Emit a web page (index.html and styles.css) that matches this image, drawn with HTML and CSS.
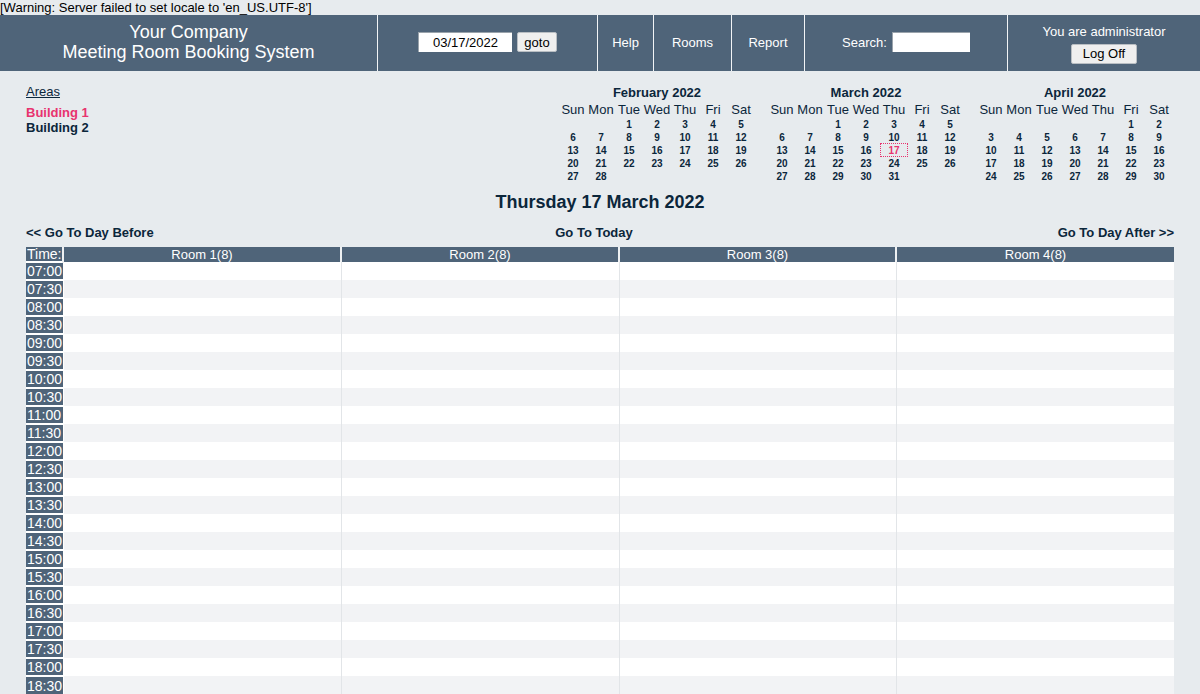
FILE: index.html
```html
<!DOCTYPE html>
<html lang="en">
<head>
<meta charset="utf-8">
<title>Meeting Room Booking System</title>
<link rel="stylesheet" href="styles.css">
</head>
<body>
<div class="warning">[Warning: Server failed to set locale to 'en_US.UTF-8']</div>
<header class="banner">
  <div class="cell company">
    <div>Your Company</div>
    <div>Meeting Room Booking System</div>
  </div>
  <div class="cell c-date">
    <input class="date-input" type="text" value="03/17/2022">
    <button class="btn btn-goto">goto</button>
  </div>
  <div class="cell c-help">Help</div>
  <div class="cell c-rooms">Rooms</div>
  <div class="cell c-report">Report</div>
  <div class="cell c-search">
    <span>Search:</span>
    <input class="search-input" type="text">
  </div>
  <div class="cell c-user">
    <div class="user-text">You are administrator</div>
    <button class="btn btn-logoff">Log Off</button>
  </div>
</header>

<main class="content">
  <div class="dwm-header">
    <div class="areas">
      <div class="areas-title">Areas</div>
      <ul class="area-list">
        <li class="area current">Building 1</li>
        <li class="area">Building 2</li>
      </ul>
    </div>
    <div class="calendars">
      <table class="minical">
        <thead>
          <tr><th colspan="7" class="cal-title">February 2022</th></tr>
          <tr class="dow"><th>Sun</th><th>Mon</th><th>Tue</th><th>Wed</th><th>Thu</th><th>Fri</th><th>Sat</th></tr>
        </thead>
        <tbody>
          <tr><td></td><td></td><td>1</td><td>2</td><td>3</td><td>4</td><td>5</td></tr>
          <tr><td>6</td><td>7</td><td>8</td><td>9</td><td>10</td><td>11</td><td>12</td></tr>
          <tr><td>13</td><td>14</td><td>15</td><td>16</td><td>17</td><td>18</td><td>19</td></tr>
          <tr><td>20</td><td>21</td><td>22</td><td>23</td><td>24</td><td>25</td><td>26</td></tr>
          <tr><td>27</td><td>28</td><td></td><td></td><td></td><td></td><td></td></tr>
        </tbody>
      </table>
      <table class="minical">
        <thead>
          <tr><th colspan="7" class="cal-title">March 2022</th></tr>
          <tr class="dow"><th>Sun</th><th>Mon</th><th>Tue</th><th>Wed</th><th>Thu</th><th>Fri</th><th>Sat</th></tr>
        </thead>
        <tbody>
          <tr><td></td><td></td><td>1</td><td>2</td><td>3</td><td>4</td><td>5</td></tr>
          <tr><td>6</td><td>7</td><td>8</td><td>9</td><td>10</td><td>11</td><td>12</td></tr>
          <tr><td>13</td><td>14</td><td>15</td><td>16</td><td class="today"><span>17</span></td><td>18</td><td>19</td></tr>
          <tr><td>20</td><td>21</td><td>22</td><td>23</td><td>24</td><td>25</td><td>26</td></tr>
          <tr><td>27</td><td>28</td><td>29</td><td>30</td><td>31</td><td></td><td></td></tr>
        </tbody>
      </table>
      <table class="minical">
        <thead>
          <tr><th colspan="7" class="cal-title">April 2022</th></tr>
          <tr class="dow"><th>Sun</th><th>Mon</th><th>Tue</th><th>Wed</th><th>Thu</th><th>Fri</th><th>Sat</th></tr>
        </thead>
        <tbody>
          <tr><td></td><td></td><td></td><td></td><td></td><td>1</td><td>2</td></tr>
          <tr><td>3</td><td>4</td><td>5</td><td>6</td><td>7</td><td>8</td><td>9</td></tr>
          <tr><td>10</td><td>11</td><td>12</td><td>13</td><td>14</td><td>15</td><td>16</td></tr>
          <tr><td>17</td><td>18</td><td>19</td><td>20</td><td>21</td><td>22</td><td>23</td></tr>
          <tr><td>24</td><td>25</td><td>26</td><td>27</td><td>28</td><td>29</td><td>30</td></tr>
        </tbody>
      </table>
    </div>
  </div>

  <h2 class="day-title">Thursday 17 March 2022</h2>

  <nav class="day-nav">
    <a class="nav-before">&lt;&lt; Go To Day Before</a>
    <a class="nav-today">Go To Today</a>
    <a class="nav-after">Go To Day After &gt;&gt;</a>
  </nav>

  <table class="dwm-main">
    <colgroup>
      <col class="col-time">
      <col class="col-room"><col class="col-room"><col class="col-room3"><col class="col-room">
    </colgroup>
    <thead>
      <tr><th class="time">Time:</th><th>Room 1(8)</th><th>Room 2(8)</th><th>Room 3(8)</th><th>Room 4(8)</th></tr>
    </thead>
    <tbody>
      <tr class="even"><td class="time">07:00</td><td></td><td></td><td></td><td></td></tr>
      <tr class="odd"><td class="time">07:30</td><td></td><td></td><td></td><td></td></tr>
      <tr class="even"><td class="time">08:00</td><td></td><td></td><td></td><td></td></tr>
      <tr class="odd"><td class="time">08:30</td><td></td><td></td><td></td><td></td></tr>
      <tr class="even"><td class="time">09:00</td><td></td><td></td><td></td><td></td></tr>
      <tr class="odd"><td class="time">09:30</td><td></td><td></td><td></td><td></td></tr>
      <tr class="even"><td class="time">10:00</td><td></td><td></td><td></td><td></td></tr>
      <tr class="odd"><td class="time">10:30</td><td></td><td></td><td></td><td></td></tr>
      <tr class="even"><td class="time">11:00</td><td></td><td></td><td></td><td></td></tr>
      <tr class="odd"><td class="time">11:30</td><td></td><td></td><td></td><td></td></tr>
      <tr class="even"><td class="time">12:00</td><td></td><td></td><td></td><td></td></tr>
      <tr class="odd"><td class="time">12:30</td><td></td><td></td><td></td><td></td></tr>
      <tr class="even"><td class="time">13:00</td><td></td><td></td><td></td><td></td></tr>
      <tr class="odd"><td class="time">13:30</td><td></td><td></td><td></td><td></td></tr>
      <tr class="even"><td class="time">14:00</td><td></td><td></td><td></td><td></td></tr>
      <tr class="odd"><td class="time">14:30</td><td></td><td></td><td></td><td></td></tr>
      <tr class="even"><td class="time">15:00</td><td></td><td></td><td></td><td></td></tr>
      <tr class="odd"><td class="time">15:30</td><td></td><td></td><td></td><td></td></tr>
      <tr class="even"><td class="time">16:00</td><td></td><td></td><td></td><td></td></tr>
      <tr class="odd"><td class="time">16:30</td><td></td><td></td><td></td><td></td></tr>
      <tr class="even"><td class="time">17:00</td><td></td><td></td><td></td><td></td></tr>
      <tr class="odd"><td class="time">17:30</td><td></td><td></td><td></td><td></td></tr>
      <tr class="even"><td class="time">18:00</td><td></td><td></td><td></td><td></td></tr>
      <tr class="odd"><td class="time">18:30</td><td></td><td></td><td></td><td></td></tr>
    </tbody>
  </table>
</main>
</body>
</html>
```

FILE: styles.css
```css
* { box-sizing: border-box; }

html, body {
  margin: 0;
  padding: 0;
}

body {
  background: #e7ebee;
  color: #0b263b;
  font-family: "Liberation Sans", Arial, sans-serif;
  font-size: 13px;
}

.warning {
  height: 15px;
  line-height: 15px;
  color: #000;
  font-size: 13px;
}

/* ---------- banner ---------- */
.banner {
  display: flex;
  height: 56px;
  background: #4f6479;
  color: #fff;
  font-size: 13px;
}

.cell {
  display: flex;
  align-items: center;
  justify-content: center;
  border-left: 1px solid #f2f4f6;
  padding-bottom: 2px;
}

.company {
  width: 377px;
  border-left: none;
  flex-direction: column;
  font-size: 18px;
  line-height: 20px;
  text-align: center;
}

.c-date { width: 220px; gap: 5px; }
.c-help { width: 56px; }
.c-rooms { width: 78px; }
.c-report { width: 73px; }
.c-search { width: 203px; gap: 5px; }
.c-user {
  width: 193px;
  flex-direction: column;
  gap: 4px;
  padding-bottom: 0;
}

.user-text { line-height: 17px; }

.date-input,
.search-input {
  height: 20px;
  border: none;
  border-top: 1px solid #9aa3ab;
  border-left: 1px solid #9aa3ab;
  background: #fff;
  font-family: "Liberation Sans", Arial, sans-serif;
  font-size: 13px;
  color: #000;
  padding: 0 2px;
}

.date-input { width: 94px; text-align: center; }
.search-input { width: 78px; }

.btn {
  height: 20px;
  background: #efefef;
  border: 1px solid #b9bec3;
  border-radius: 2px;
  font-family: "Liberation Sans", Arial, sans-serif;
  font-size: 13px;
  color: #000;
  padding: 0;
}

.btn-goto { width: 40px; }
.btn-logoff { width: 66px; height: 20px; }

/* ---------- content ---------- */
.content {
  padding: 13px 26px 0;
}

.dwm-header {
  display: flex;
  justify-content: space-between;
  align-items: flex-start;
}

.areas-title {
  line-height: 15px;
  text-decoration: underline;
}

.area-list {
  list-style: none;
  margin: 6px 0 0;
  padding: 0;
}

.area {
  font-weight: bold;
  line-height: 15px;
}

.area.current { color: #e8336f; }

.calendars {
  display: flex;
  gap: 13px;
  margin-right: 1px;
}

.minical {
  border-collapse: collapse;
  table-layout: fixed;
  width: 196px;
}

.minical th,
.minical td {
  padding: 0;
  width: 28px;
  text-align: center;
}

.cal-title {
  font-weight: bold;
  font-size: 13px;
  height: 17px;
  line-height: 17px;
}

.dow th {
  font-weight: normal;
  font-size: 13px;
  height: 17px;
  line-height: 17px;
}

.minical td {
  font-weight: bold;
  font-size: 10px;
  height: 13px;
  line-height: 13px;
}

.minical td.today span {
  display: block;
  margin: -1px auto 0;
  width: 28px;
  height: 14px;
  line-height: 13px;
  border: 1px dotted #e8336f;
  color: #e8336f;
}

.day-title {
  margin: 8px 0 0;
  font-size: 18px;
  line-height: 22px;
  text-align: center;
  font-weight: bold;
}

.day-nav {
  display: grid;
  grid-template-columns: 1fr auto 1fr;
  margin-top: 12px;
  font-weight: bold;
  line-height: 15px;
}

.nav-before { justify-self: start; }
.nav-today { justify-self: center; margin-right: 12px; }
.nav-after { justify-self: end; }

/* ---------- main table ---------- */
.dwm-main {
  margin-top: 7px;
  width: 1148px;
  table-layout: fixed;
  border-collapse: collapse;
}

.col-time { width: 37px; }
.col-room { width: 278px; }
.col-room3 { width: 277px; }

.dwm-main th {
  background: #4f6479;
  color: #fff;
  font-weight: normal;
  font-size: 13px;
  height: 14px;
  line-height: 14px;
  padding: 0;
  border-left: 2px solid #eef0f2;
}

.dwm-main th.time {
  border-left: none;
  text-align: left;
  padding-left: 1px;
  font-size: 14px;
}

.dwm-main td {
  height: 18px;
  padding: 0;
  border-left: 1px solid #e2e5e8;
}

.dwm-main td.time {
  border-left: none;
  border-top: 2px solid #fff;
  border-right: 1px solid #fff;
  background: #4f6479;
  color: #fff;
  font-size: 14px;
  line-height: 16px;
  padding-left: 1px;
  vertical-align: middle;
}

.dwm-main tr.even td { background-color: #fff; }
.dwm-main tr.odd td { background-color: #f2f3f5; }
.dwm-main tr td.time { background-color: #4f6479; }
```
